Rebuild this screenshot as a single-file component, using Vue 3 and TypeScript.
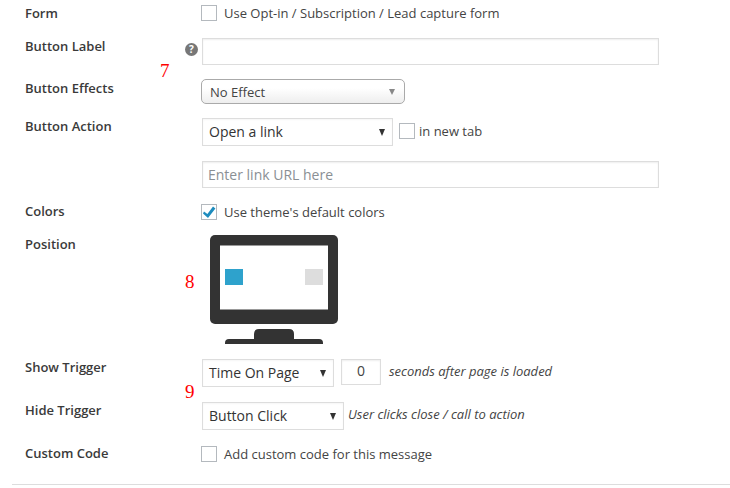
<script setup lang="ts">
const marks = [
  { n: '7', cls: 'm7' },
  { n: '8', cls: 'm8' },
  { n: '9', cls: 'm9' },
]
</script>

<template>
  <div class="page">
    <span v-for="m in marks" :key="m.n" class="mark" :class="m.cls">{{ m.n }}</span>

    <div class="row r-form">
      <div class="label">Form</div>
      <label class="check"><span class="box"></span>Use Opt-in / Subscription / Lead capture form</label>
    </div>

    <div class="row r-blabel">
      <div class="label">Button Label</div>
      <span class="help">?</span>
      <div class="input wide"></div>
    </div>

    <div class="row r-effects">
      <div class="label">Button Effects</div>
      <div class="wpselect">No Effect<span class="caret grey"></span></div>
    </div>

    <div class="row r-action">
      <div class="label">Button Action</div>
      <div class="select sel-action">Open a link<span class="caret"></span></div>
      <label class="check newtab"><span class="box"></span>in new tab</label>
    </div>

    <div class="row r-url">
      <div class="label"></div>
      <div class="input wide placeholder">Enter link URL here</div>
    </div>

    <div class="row r-colors">
      <div class="label">Colors</div>
      <label class="check">
        <span class="box">
          <svg width="16" height="16" viewBox="0 0 16 16"><path d="M3 7.6 L6.4 10 L12 2.6 L14.4 4.6 L7 14 L2 9.4 Z" fill="#1e8cbe" /></svg>
        </span>Use theme's default colors
      </label>
    </div>

    <div class="row r-position">
      <div class="label">Position</div>
      <svg class="monitor" width="128" height="109" viewBox="0 0 128 109">
        <rect x="0" y="0" width="128" height="89" rx="5" fill="#333" />
        <rect x="10" y="10.5" width="108" height="64" fill="#fff" />
        <rect x="15" y="34" width="18" height="16" fill="#2ea2cc" />
        <rect x="95" y="34" width="18" height="16" fill="#ddd" />
        <path d="M44 104 V99 Q44 94 49 94 H79 Q84 94 84 99 V104 Z" fill="#333" />
        <path d="M15 109 V108 Q15 104 19 104 H109 Q113 104 113 108 V109 Z" fill="#333" />
      </svg>
    </div>

    <div class="row r-show">
      <div class="label">Show Trigger</div>
      <div class="select sel-show">Time On Page<span class="caret"></span></div>
      <div class="input num">0</div>
      <em class="note first">seconds after page is loaded</em>
    </div>

    <div class="row r-hide">
      <div class="label">Hide Trigger</div>
      <div class="select sel-hide">Button Click<span class="caret"></span></div>
      <em class="note second">User clicks close / call to action</em>
    </div>

    <div class="row r-code">
      <div class="label">Custom Code</div>
      <label class="check"><span class="box"></span>Add custom code for this message</label>
    </div>

    <div class="rule"></div>
  </div>
</template>

<style scoped>
.page {
  position: relative;
  width: 730px;
  height: 488px;
  overflow: hidden;
  background: #fff;
  font-family: "Open Sans", "Liberation Sans", sans-serif;
  font-size: 13px;
  color: #444;
  box-sizing: border-box;
  padding-left: 25px;
}
.row {
  display: flex;
  align-items: flex-start;
  position: relative;
}
.label {
  width: 176px;
  flex: none;
  font-weight: 600;
  color: #3a3a3a;
  font-size: 13px;
  line-height: 18px;
}
.check {
  display: flex;
  align-items: center;
  color: #444;
  line-height: 16px;
}
.box {
  width: 14px;
  height: 14px;
  border: 1px solid #b4b9be;
  background: #fff;
  margin-right: 7px;
  flex: none;
  display: block;
  position: relative;
}
.box svg {
  position: absolute;
  left: -1px;
  top: -1px;
}
.newtab .box {
  margin-right: 4px;
}
.input {
  box-sizing: border-box;
  border: 1px solid #ddd;
  box-shadow: inset 0 1px 2px rgba(0, 0, 0, 0.07);
  background: #fff;
}
.wide {
  width: 457px;
  height: 27px;
  margin-left: 1px;
}
.placeholder {
  color: #8a8f94;
  font-size: 14px;
  line-height: 25px;
  padding-left: 5px;
}
.help {
  position: absolute;
  left: 160px;
  top: 5px;
  width: 13px;
  height: 13px;
  border-radius: 50%;
  background: #777;
  color: #fff;
  font-size: 10px;
  font-weight: 700;
  line-height: 13px;
  text-align: center;
}
.select {
  box-sizing: border-box;
  height: 28px;
  border: 1px solid #ddd;
  margin-left: 1px;
  padding-left: 6px;
  font-size: 14px;
  line-height: 26px;
  color: #333;
  position: relative;
  background: #fff;
  box-shadow: inset 0 1px 2px rgba(0, 0, 0, 0.04);
}
.sel-action { width: 191px; }
.sel-show { width: 132px; }
.sel-hide { width: 142px; }
.caret {
  position: absolute;
  right: 7px;
  top: 10px;
  border-left: 3.5px solid transparent;
  border-right: 3.5px solid transparent;
  border-top: 7px solid #333;
}
.caret.grey {
  border-top-color: #888;
  right: 9px;
  top: 9px;
  border-top-width: 6px;
}
.wpselect {
  box-sizing: border-box;
  width: 204px;
  height: 25px;
  border: 1px solid #aaa;
  border-radius: 5px;
  background: linear-gradient(#fff, #fff 35%, #eee);
  padding-left: 8px;
  font-size: 13px;
  line-height: 25px;
  color: #444;
  position: relative;
}
.newtab { margin-left: 6px; margin-top: 5px; }
.num {
  width: 40px;
  height: 26px;
  margin-left: 7px;
  font-size: 14px;
  line-height: 21px;
  text-align: center;
  color: #444;
}
.note {
  font-size: 13px;
  color: #444;
  line-height: 18px;
}
.note.first { margin-left: 8px; margin-top: 3px; }
.note.second { margin-left: 4px; margin-top: 3px; }

.r-form { height: 38px; padding-top: 5px; box-sizing: border-box; }
.r-form .label { margin-top: -1px; }
.r-blabel { height: 41px; }
.r-blabel .label { margin-top: -1px; }
.r-effects { height: 39px; }
.r-action { height: 43px; }
.r-action .label { margin-top: -1px; }
.r-url { height: 43px; }
.r-colors { height: 31px; }
.r-colors .label { margin-top: -2px; }
.r-position { height: 124px; }
.monitor { margin-left: 9px; display: block; }
.r-show { height: 43px; }
.r-show .label { margin-top: -1px; }
.r-hide { height: 44px; }
.r-hide .label { margin-top: -1px; }
.r-code { height: 38px; }
.r-code .label { margin-top: -2px; }
.rule {
  height: 1px;
  background: #ddd;
  margin-left: -13px;
}
.mark {
  position: absolute;
  font-family: "Liberation Serif", serif;
  font-size: 19px;
  line-height: 20px;
  color: #ff0000;
}
.m7 { left: 160px; top: 61px; }
.m8 { left: 185px; top: 272px; }
.m9 { left: 185px; top: 382px; }
</style>
